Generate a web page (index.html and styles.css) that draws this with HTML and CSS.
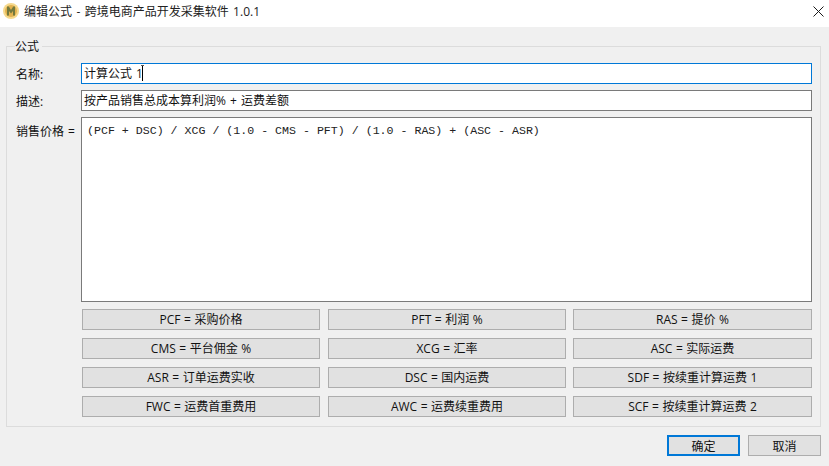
FILE: index.html
```
<!DOCTYPE html>
<html lang="zh-CN">
<head>
<meta charset="utf-8">
<title>编辑公式</title>
<link rel="stylesheet" href="styles.css">
</head>
<body>
<div class="window">
  <header class="titlebar">
    <svg class="app-icon" width="16" height="16" viewBox="0 0 16 16" aria-hidden="true">
      <circle cx="8" cy="8" r="8" fill="#f6d98c"/>
      <circle cx="8" cy="8" r="6" fill="#e2b24f"/>
      <path d="M4 12.500V3.500h1.800L8 7l2.200-3.500H12v9h-2V8L8 10.500 6 8v4.500z" fill="#5f6f3a" opacity=".85"/>
    </svg>
    <span class="title">编辑公式 - 跨境电商产品开发采集软件 1.0.1</span>
    <svg class="close" width="11" height="11" viewBox="0 0 11 11" aria-hidden="true">
      <path d="M.5.500l10 10M10.500.500l-10 10" stroke="#1a1a1a" stroke-width="1" fill="none"/>
    </svg>
  </header>
  <main class="content">
    <fieldset class="group">
      <legend class="legend">公式</legend>
      <div class="row">
        <label class="label">名称:</label>
        <div class="input focused"><span>计算公式 1</span><i class="caret"></i><i class="ibeam"></i></div>
      </div>
      <div class="row">
        <label class="label">描述:</label>
        <div class="input"><span>按产品销售总成本算利润% + 运费差额</span></div>
      </div>
      <div class="row row-area">
        <label class="label">销售价格 =</label>
        <div class="area">(PCF + DSC) / XCG / (1.0 - CMS - PFT) / (1.0 - RAS) + (ASC - ASR)</div>
      </div>
      <div class="vars">
        <div class="var">PCF = 采购价格</div>
        <div class="var">PFT = 利润 %</div>
        <div class="var">RAS = 提价 %</div>
        <div class="var">CMS = 平台佣金 %</div>
        <div class="var">XCG = 汇率</div>
        <div class="var">ASC = 实际运费</div>
        <div class="var">ASR = 订单运费实收</div>
        <div class="var">DSC = 国内运费</div>
        <div class="var">SDF = 按续重计算运费 1</div>
        <div class="var">FWC = 运费首重费用</div>
        <div class="var">AWC = 运费续重费用</div>
        <div class="var">SCF = 按续重计算运费 2</div>
      </div>
    </fieldset>
    <footer class="actions">
      <div class="btn primary">确定</div>
      <div class="btn">取消</div>
    </footer>
  </main>
</div>
</body>
</html>
```
FILE: styles.css
```
* { box-sizing: border-box; }
html, body { margin: 0; height: 100%; }
body {
  font-family: "Open Sans", "Noto Sans CJK SC", sans-serif;
  font-size: 12px;
  color: #111;
  background: #f0f0f0;
  overflow: hidden;
}
.window { width: 829px; height: 466px; display: flex; flex-direction: column; }
.titlebar {
  height: 27px;
  background: #fff;
  display: flex;
  align-items: center;
  padding: 0 5px 5px 3px;
  flex: none;
}
.app-icon { flex: none; }
.title { margin-left: 5px; flex: 1; font-size: 12px; color: #222; white-space: nowrap; word-spacing: 1.3px; }
.content { padding: 11px 8px 0 6px; flex: 1; display: flex; flex-direction: column; }
.group {
  margin: 0;
  padding: 0 8px 10px 9px;
  height: 389px;
  border: 1px solid #dcdcdc;
  min-width: 0;
}
.legend { padding: 0 3px 0 0; margin-left: -1px; line-height: 17px; font-size: 12px; }
.row { display: flex; margin-bottom: 6px; height: 21px; }
.row:first-of-type { margin-top: 8px; }
.row-area { height: 185px; margin-bottom: 7px; }
.label { width: 65px; flex: none; line-height: 24px; white-space: nowrap; word-spacing: 1px; }
.row-area .label { line-height: 29px; }
.input {
  position: relative;
  flex: 1;
  border: 1px solid #7a7a7a;
  background: #fff;
  padding: 0 2px;
  line-height: 19px;
  white-space: nowrap;
  word-spacing: 1px;
}
.focused { border-color: #0078d7; }
.caret { position: absolute; left: 60px; top: 2px; width: 1px; height: 15px; background: #000; }
.ibeam { position: absolute; left: 59px; top: 1px; width: 3px; height: 2px; border-top: 1px solid #555; }
.area {
  flex: 1;
  border: 1px solid #7a7a7a;
  background: #fff;
  padding: 6px 5px;
  font-family: "Liberation Mono", "Noto Sans CJK SC", monospace;
  font-size: 11.620px;
  line-height: 14px;
  color: #222;
  white-space: pre;
}
.vars {
  display: grid;
  margin-left: 66px;
  grid-template-columns: 238px 238px 238px;
  column-gap: 8px;
  row-gap: 8px;
  grid-auto-rows: 21px;
}
.vars .var:nth-child(3n) { margin-left: -1px; }
.var {
  border: 1px solid #adadad;
  background: #e1e1e1;
  text-align: center;
  line-height: 20px;
  white-space: nowrap;
  word-spacing: .4px;
}
.actions { display: flex; justify-content: flex-end; gap: 8px; margin-top: 8px; }
.btn {
  width: 73px;
  height: 21px;
  border: 1px solid #adadad;
  background: #e1e1e1;
  text-align: center;
  line-height: 21px;
}
.primary { border: 2px solid #0078d7; line-height: 19px; }
```
